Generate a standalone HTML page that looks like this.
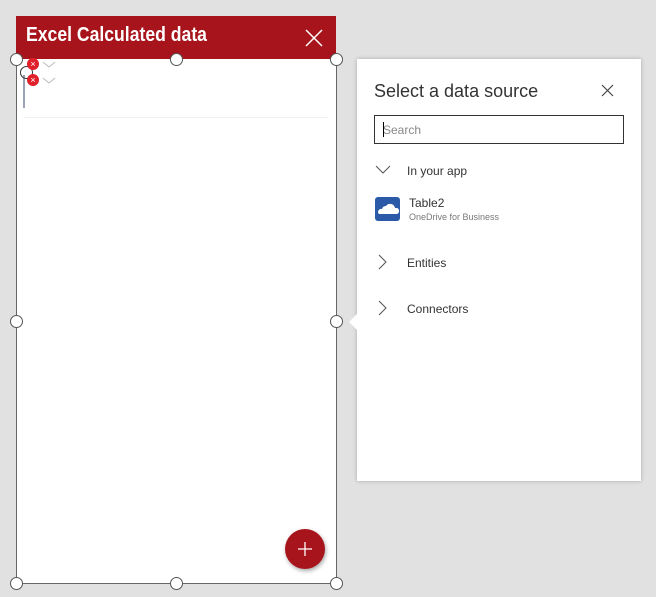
<!DOCTYPE html>
<html><head><style>
body{margin:0;width:656px;height:597px;background:#e1e1e1;position:relative;overflow:hidden;font-family:"Segoe UI","Liberation Sans",sans-serif;}
.abs{position:absolute}
.h{position:absolute;width:11px;height:11px;border:1px solid #555;border-radius:50%;background:#fff}
</style></head><body>
<div class="abs" style="left:16px;top:59px;width:319px;height:524px;background:#fff;border:1px solid #666;border-top:none"></div>
<div class="abs" style="left:16px;top:16px;width:320px;height:43px;background:#a8141b"></div>
<div class="abs" style="left:26px;top:24px;color:#fff;font-weight:bold;font-size:20px;font-family:'Liberation Sans',sans-serif;transform:scaleX(0.88);transform-origin:left;white-space:nowrap">Excel Calculated data</div>
<svg class="abs" style="left:305px;top:29px" width="18" height="18"><path d="M1 1L17 17M17 1L1 17" stroke="#fff" stroke-width="1.5"/></svg>
<div class="abs" style="left:24px;top:117px;width:304px;height:1px;background:#f0f0f0"></div>
<div class="abs" style="left:23px;top:75px;width:2px;height:33px;background:#9aa3b5"></div>
<div class="abs" style="left:20px;top:66px;width:11px;height:11px;border:1.5px solid #333;border-radius:50%"></div>
<div class="abs" style="left:27px;top:58px;width:12px;height:12px;border-radius:50%;background:#e0202a;color:#fff;font-size:9px;line-height:12px;text-align:center">×</div>
<div class="abs" style="left:27px;top:74px;width:12px;height:12px;border-radius:50%;background:#e0202a;color:#fff;font-size:9px;line-height:12px;text-align:center">×</div>
<svg class="abs" style="left:42px;top:60px" width="14" height="24"><path d="M1 2L7 7L13 2M1 18L7 23L13 18" stroke="#bbb" fill="none"/></svg>
<div class="h" style="left:10px;top:53px"></div><div class="h" style="left:170px;top:53px"></div><div class="h" style="left:330px;top:53px"></div>
<div class="h" style="left:10px;top:315px"></div><div class="h" style="left:330px;top:315px"></div>
<div class="h" style="left:10px;top:577px"></div><div class="h" style="left:170px;top:577px"></div><div class="h" style="left:330px;top:577px"></div>
<div class="abs" style="left:285px;top:529px;width:40px;height:40px;border-radius:50%;background:#a8141b;box-shadow:1px 2px 4px rgba(0,0,0,.35)"></div>
<svg class="abs" style="left:297px;top:541px" width="16" height="16"><path d="M8 1V15M1 8H15" stroke="#fff" stroke-width="1.3"/></svg>
<div class="abs" style="left:357px;top:59px;width:284px;height:422px;background:#fff;box-shadow:0 0 4px rgba(0,0,0,.25)"></div>
<div class="abs" style="left:349px;top:313px;width:0;height:0;border-top:9px solid transparent;border-bottom:9px solid transparent;border-right:9px solid #fff"></div>
<div class="abs" style="left:374px;top:81px;font-size:18px;color:#333">Select a data source</div>
<svg class="abs" style="left:601px;top:84px" width="13" height="13"><path d="M1 1L12 12M12 1L1 12" stroke="#444" stroke-width="1.2"/></svg>
<div class="abs" style="left:374px;top:115px;width:248px;height:27px;border:1px solid #333"></div>
<div class="abs" style="left:383px;top:123px;font-size:12px;color:#888">Search</div>
<div class="abs" style="left:383px;top:122px;width:1px;height:15px;background:#000"></div>
<svg class="abs" style="left:375px;top:165px" width="16" height="10"><path d="M1 1L8 8L15 1" stroke="#555" fill="none"/></svg>
<div class="abs" style="left:407px;top:164px;font-size:12px;color:#333">In your app</div>
<div class="abs" style="left:375px;top:197px;width:25px;height:24px;border-radius:3px;background:#2a5aa8"></div>
<svg class="abs" style="left:377px;top:203px" width="22" height="12"><path d="M2 11H20A3 3 0 0 0 18 5A5 5 0 0 0 9 3A4 4 0 0 0 5 6A3 3 0 0 0 2 11Z" fill="#fff"/></svg>
<div class="abs" style="left:409px;top:196px;font-size:12px;color:#333">Table2</div>
<div class="abs" style="left:409px;top:212px;font-size:9px;color:#777">OneDrive for Business</div>
<svg class="abs" style="left:378px;top:254px" width="10" height="16"><path d="M1 1L8 8L1 15" stroke="#555" fill="none"/></svg>
<div class="abs" style="left:407px;top:256px;font-size:12px;color:#333">Entities</div>
<svg class="abs" style="left:378px;top:300px" width="10" height="16"><path d="M1 1L8 8L1 15" stroke="#555" fill="none"/></svg>
<div class="abs" style="left:407px;top:302px;font-size:12px;color:#333">Connectors</div>
</body></html>
